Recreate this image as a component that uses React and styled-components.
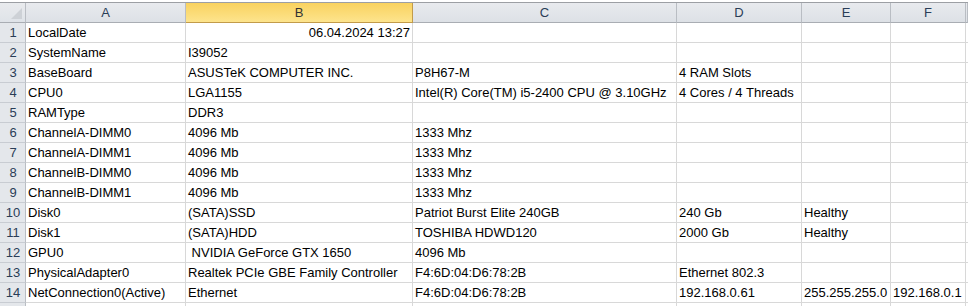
import React from "react";
import styled, { createGlobalStyle, css } from "styled-components";

const GlobalStyle = createGlobalStyle`
  html, body {
    margin: 0;
    padding: 0;
    background: #ffffff;
  }
  body {
    font-family: "Liberation Sans", Arial, sans-serif;
    font-size: 13px;
    color: #000000;
    overflow: hidden;
  }
`;

const columns = [
  { key: "A", width: 160 },
  { key: "B", width: 227, selected: true },
  { key: "C", width: 264 },
  { key: "D", width: 125 },
  { key: "E", width: 89 },
  { key: "F", width: 75 },
];

// each row: A..F, right-aligned cells marked with {r: text}
const rows = [
  ["LocalDate", { r: "06.04.2024 13:27" }, "", "", "", ""],
  ["SystemName", "I39052", "", "", "", ""],
  ["BaseBoard", "ASUSTeK COMPUTER INC.", "P8H67-M", "4 RAM Slots", "", ""],
  ["CPU0", "LGA1155", "Intel(R) Core(TM) i5-2400 CPU @ 3.10GHz", "4 Cores / 4 Threads", "", ""],
  ["RAMType", "DDR3", "", "", "", ""],
  ["ChannelA-DIMM0", "4096 Mb", "1333 Mhz", "", "", ""],
  ["ChannelA-DIMM1", "4096 Mb", "1333 Mhz", "", "", ""],
  ["ChannelB-DIMM0", "4096 Mb", "1333 Mhz", "", "", ""],
  ["ChannelB-DIMM1", "4096 Mb", "1333 Mhz", "", "", ""],
  ["Disk0", "(SATA)SSD", "Patriot Burst Elite 240GB", "240 Gb", "Healthy", ""],
  ["Disk1", "(SATA)HDD", "TOSHIBA HDWD120", "2000 Gb", "Healthy", ""],
  ["GPU0", "\u00a0NVIDIA GeForce GTX 1650", "4096 Mb", "", "", ""],
  ["PhysicalAdapter0", "Realtek PCIe GBE Family Controller", "F4:6D:04:D6:78:2B", "Ethernet 802.3", "", ""],
  ["NetConnection0(Active)", "Ethernet", "F4:6D:04:D6:78:2B", "192.168.0.61", "255.255.255.0", "192.168.0.1"],
];

const template = `26px ${columns.map((c) => `${c.width}px`).join(" ")} 1fr`;

const App = () => {
  return (
    <>
      <GlobalStyle />
      <Sheet>
        <HeaderRow>
          <Corner>
            <CornerMark />
          </Corner>
          {columns.map((c) => (
            <ColHead key={c.key} $selected={c.selected}>
              {c.key}
            </ColHead>
          ))}
          <ColHead />
        </HeaderRow>
        {rows.map((row, i) => (
          <Row key={i}>
            <RowHead>{i + 1}</RowHead>
            {row.map((cell, j) =>
              typeof cell === "object" ? (
                <Cell key={j} $right>
                  {cell.r}
                </Cell>
              ) : (
                <Cell key={j}>{cell}</Cell>
              )
            )}
            <Cell />
          </Row>
        ))}
        {/* row 15, only its top edge shows */}
        <Row>
          <RowHead />
          {columns.map((c) => (
            <Cell key={c.key} />
          ))}
          <Cell />
        </Row>
      </Sheet>
    </>
  );
};

export default App;

const Sheet = styled.div`
  width: 968px;
  height: 306px;
  overflow: hidden;
  padding-top: 2px;
  box-sizing: border-box;
  background: #ffffff;
`;

const HeaderRow = styled.div`
  display: grid;
  grid-template-columns: ${template};
  height: 21px;
  border-top: 1px solid #9c9fa4;
  box-sizing: border-box;
`;

const Corner = styled.div`
  position: relative;
  box-sizing: border-box;
  background: linear-gradient(to bottom, #e9ebee, #dfe3e8);
  border-right: 1px solid #b9bdc3;
  border-bottom: 1px solid #a9adb3;
`;

const CornerMark = styled.div`
  position: absolute;
  right: 3px;
  bottom: 3px;
  width: 0;
  height: 0;
  border-left: 11px solid transparent;
  border-bottom: 11px solid #cdd1d6;
`;

const ColHead = styled.div`
  box-sizing: border-box;
  display: flex;
  align-items: center;
  justify-content: center;
  font-size: 13px;
  color: #2a3d57;
  background: linear-gradient(to bottom, #e8eaee, #dde1e6);
  border-right: 1px solid #b9bdc3;
  border-bottom: 1px solid #a9adb3;
  ${(p) =>
    p.$selected &&
    css`
      background: linear-gradient(to bottom, #f9d25f, #fde48d);
      border-bottom-color: #c29b4a;
      border-right-color: #c29b4a;
      color: #333333;
    `}
`;

const Row = styled.div`
  display: grid;
  grid-template-columns: ${template};
  height: 20px;
`;

const RowHead = styled.div`
  box-sizing: border-box;
  display: flex;
  align-items: center;
  justify-content: center;
  padding-left: 1px;
  font-size: 13px;
  color: #2a3d57;
  background: #e4e7eb;
  border-right: 1px solid #b9bdc3;
  border-bottom: 1px solid #c8ccd2;
`;

const Cell = styled.div`
  box-sizing: border-box;
  display: flex;
  align-items: center;
  justify-content: ${(p) => (p.$right ? "flex-end" : "flex-start")};
  padding: 1px 2px 0 2px;
  white-space: pre;
  overflow: visible;
  border-right: 1px solid #d8d8d8;
  border-bottom: 1px solid #d8d8d8;
  line-height: 18px;
`;
